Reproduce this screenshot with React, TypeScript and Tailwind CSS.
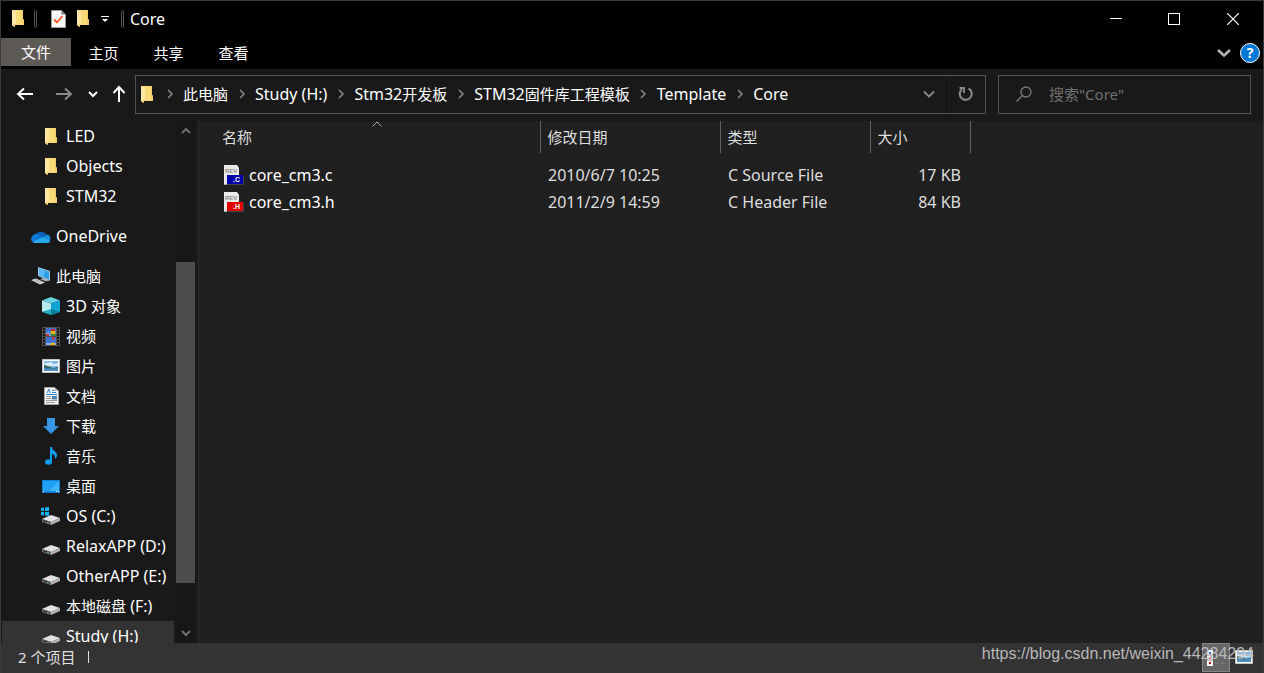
import type { ReactNode } from "react";

const FONT = "font-['Noto_Sans','Noto_Sans_CJK_SC',sans-serif]";

// Latin runs are set one step larger than the Chinese ones beside them
function Label({ text }: { text: string }) {
    const runs = text.match(/[\x20-\x7e]+|[^\x20-\x7e]+/g) ?? [];
    return (
        <span className="whitespace-pre">
            {runs.map((run) => (
                <span key={run} className={/^[\x20-\x7e]/.test(run) ? "text-base" : "text-[15px]"}>
                    {run}
                </span>
            ))}
        </span>
    );
}

/* ---------- icons ---------- */

function FolderIcon() {
    return (
        <svg width="12" height="17" viewBox="0 0 12 17" aria-hidden="true">
            <path d="M1 0h10v9l1 1v5H3z" fill="#f9d978" />
            <path d="M9 0h2v9l1 1v5h-2z" fill="#f3cf6c" />
            <path d="M0 0h1l3 2v11l-1 1v3l-3-2z" fill="#ffe8a8" />
            <path d="M3 14l-1 3-2-2z" fill="#eec765" />
        </svg>
    );
}

function CheckDocIcon() {
    return (
        <svg width="15" height="18" viewBox="0 0 15 18" aria-hidden="true">
            <path d="M.5.5h10l4 4v13H.5z" fill="#f6f8fa" stroke="#9a9a9a" />
            <path d="M10.5.5v4h4z" fill="#7d7d7d" />
            <path d="M3 9.500l3 3L11.500 6" fill="none" stroke="#ef5a1c" strokeWidth="1.800" />
        </svg>
    );
}

function Chevron({ dir, bold = false }: { dir: "up" | "down" | "right"; bold?: boolean }) {
    const paths = {
        up: "M2 8l4-4 4 4",
        down: "M2 4l4 4 4-4",
        right: "M4 2l4 4-4 4",
    };
    return (
        <svg width="12" height="12" viewBox="0 0 12 12" aria-hidden="true">
            <path d={paths[dir]} fill="none" stroke="currentColor" strokeWidth={bold ? 2 : 1.5} />
        </svg>
    );
}

function ArrowIcon({ className = "" }: { className?: string }) {
    return (
        <svg width="18" height="18" viewBox="0 0 18 18" className={className} aria-hidden="true">
            <path d="M17 9H2.500M8 3.500L2 9l6 5.500" fill="none" stroke="currentColor" strokeWidth="2" />
        </svg>
    );
}

function OneDriveIcon() {
    return (
        <svg width="20" height="13" viewBox="0 0 20 13" aria-hidden="true">
            <path d="M4.500 5A6 5 0 0 1 15.500 4.500L12 8z" fill="#0a60b4" />
            <path d="M4 13A4 4 0 0 1 1 6.500 5 5 0 0 1 7.500 4.200L14 8z" fill="#0f78d4" />
            <path d="M12 7.500L15.500 4.500A4.300 4.300 0 0 1 19.500 8.500L18 11z" fill="#1490df" />
            <path d="M2 11.500L12 7.200l7.300 3.600A2.800 2.800 0 0 1 17 13H4.500A4 4 0 0 1 2 11.500z" fill="#29a8ea" />
        </svg>
    );
}

function ComputerIcon() {
    return (
        <svg width="20" height="18" viewBox="0 0 20 18" aria-hidden="true">
            <path d="M7 0l12 4v10L7 9z" fill="#9fc4dc" />
            <path d="M8 1.500l10 3.300v7.700L8 8.300z" fill="#2d9fe8" />
            <path d="M8 1.500l6 2-1.500 6.900L8 8.300z" fill="#56b8f4" />
            <path d="M9 12l4-1 6 2-4 1.500z" fill="#a8b2b8" />
            <path d="M0 13l5-1.500 9 4L9 17.500z" fill="#d5dade" />
            <path d="M2.500 13l3-.8 6 2.800-3 1z" fill="#aeb6bb" />
        </svg>
    );
}

function CubeIcon() {
    return (
        <svg width="18" height="18" viewBox="0 0 18 18" aria-hidden="true">
            <path d="M9 0l9 3.500-9 3-9-3z" fill="#69d3e3" />
            <path d="M0 3.500l9 3V13L0 15z" fill="#b5eaf0" />
            <path d="M18 3.500l-9 3V13l9 2z" fill="#0ea5d6" />
            <path d="M0 15l9-3 9 3-9 3z" fill="#23aebf" />
            <path d="M9 12l9 3-9 3z" fill="#087e98" />
        </svg>
    );
}

function VideoIcon() {
    const holes = [1, 4, 7, 10, 13, 16];
    return (
        <svg width="18" height="19" viewBox="0 0 18 19" aria-hidden="true">
            <path d="M0 0h18v19H0z" fill="#525252" />
            {holes.map((y) => (
                <path key={y} d={`M1 ${y}h2v2h-2zM15 ${y}h2v2h-2z`} fill="#161616" />
            ))}
            <path d="M4 1h10v8H4zM4 10h10v8H4z" fill="#3f73d3" />
            <path d="M4 6l3-1 2 4H4zM4 16h10v2H4z" fill="#7fb0ea" />
            <circle cx="11" cy="5" r="2.500" fill="#e6b51d" />
            <path d="M9 2h4v2H9zM4 7h3v2H4zM10 10h3l-1 3h-1z" fill="#c92f25" />
            <path d="M9 7h5v2H9z" fill="#3f8a3a" />
            <path d="M8 17l3-2 2 2v1H8z" fill="#e6b51d" />
        </svg>
    );
}

function PictureIcon() {
    return (
        <svg width="18" height="14" viewBox="0 0 18 14" aria-hidden="true">
            <path d="M.5.5h17v13H.5z" fill="#fff" stroke="#c4c4c4" />
            <path d="M2 2h14v10H2z" fill="#7db6ea" />
            <path d="M4 4l5-1 3 2 4-1v3H2V5z" fill="#d9ebf8" />
            <path d="M2 6l4 1 5 2 5-1v2H2z" fill="#32695e" />
            <path d="M2 9l7 .5 7-.5v3H2z" fill="#4b8dc0" />
        </svg>
    );
}

function DocumentIcon() {
    return (
        <svg width="15" height="18" viewBox="0 0 15 18" aria-hidden="true">
            <path d="M.5.5h10l4 3.500v13.500H.5z" fill="#f8f8f8" stroke="#a5a5a5" />
            <path d="M10.500.5v3.500h4z" fill="#b5b5b5" />
            <path d="M3 6l2-4 1 4M8 3.500h2M8 5.500h4M2 7.500h11" fill="none" stroke="#2487cf" />
            <path d="M2 9.500h5M2 11.500h5M2 13.500h11M2 15.500h9" stroke="#9a9a9a" />
            <path d="M8 9h5v3.500H8z" fill="#4b87b4" />
        </svg>
    );
}

function DownloadIcon() {
    return (
        <svg width="16" height="16" viewBox="0 0 16 16" aria-hidden="true">
            <path d="M4 0h8v8h4l-8 8-8-8h4z" fill="#3a94e4" />
        </svg>
    );
}

function MusicIcon() {
    return (
        <svg width="12" height="18" viewBox="0 0 12 18" aria-hidden="true">
            <ellipse cx="3.500" cy="15" rx="3.500" ry="2.700" fill="#109df0" />
            <path d="M5 0h2c0 4 5 4 5 8 0 2-1 3-2 4 .5-3-1-4.500-3-5v8H5z" fill="#109df0" />
        </svg>
    );
}

function DesktopIcon() {
    return (
        <svg width="18" height="13" viewBox="0 0 18 13" aria-hidden="true">
            <path d="M0 0h18v13H0z" fill="#1080d5" />
            <path d="M1 1h16v10H1z" fill="#1fa1f7" />
            <path d="M17 1v10H7z" fill="#3eb2fb" />
            <path d="M1 11.500h1M14 11.500h1M16 11.500h1" stroke="#fff" />
        </svg>
    );
}

function DriveIcon({ system = false }: { system?: boolean }) {
    return (
        <svg width="20" height="18" viewBox="0 0 20 18" aria-hidden="true">
            <path d="M1 12l9-4 9 3-9 4z" fill="#e2e2e4" />
            <path d="M1 12l9 3v3l-9-3z" fill="#77777a" />
            <path d="M2 13l7 2.300v1.500L2 14.500z" fill="#303032" />
            <path d="M10 15l9-4v3l-9 4z" fill="#b4b4b7" />
            <path d="M6 15h2v1H6z" fill="#35c04a" />
            {system && <path d="M0 1l3-.5V4H0zM4 .4L8 0v4H4zM0 5h3v3.500L0 8zM4 5h4v4l-4-.5z" fill="#10b4f0" />}
        </svg>
    );
}

function SourceFileIcon({ tag, color }: { tag: string; color: string }) {
    return (
        <svg width="20" height="20" viewBox="0 0 20 20" aria-hidden="true">
            <path d="M0 0h13l2 3v17H0z" fill="#eaeaea" />
            <path d="M0 19h15v1H0z" fill="#aaa" />
            <text x="1" y="8" fontSize="6" fontWeight="700" fill="#8c8c8c" fontFamily="Liberation Sans, sans-serif">
                REV
            </text>
            <path d="M3 10h16v9H3z" fill={color} />
            <path d="M19.500 11v8.500H3" fill="none" stroke="#444" />
            <text x="9" y="17" fontSize="7" fontWeight="700" fill="#fff" fontFamily="Liberation Sans, sans-serif">
                {tag}
            </text>
        </svg>
    );
}

function Separator() {
    return <span className="h-[18px] w-[3px] rounded-sm border border-[#555]" />;
}

/* ---------- data ---------- */

interface TreeItem {
    label: string;
    icon: ReactNode;
    root?: boolean;
    selected?: boolean;
}

const TREE: TreeItem[] = [
    { label: "LED", icon: <FolderIcon /> },
    { label: "Objects", icon: <FolderIcon /> },
    { label: "STM32", icon: <FolderIcon /> },
    { label: "OneDrive", icon: <OneDriveIcon />, root: true },
    { label: "此电脑", icon: <ComputerIcon />, root: true },
    { label: "3D 对象", icon: <CubeIcon /> },
    { label: "视频", icon: <VideoIcon /> },
    { label: "图片", icon: <PictureIcon /> },
    { label: "文档", icon: <DocumentIcon /> },
    { label: "下载", icon: <DownloadIcon /> },
    { label: "音乐", icon: <MusicIcon /> },
    { label: "桌面", icon: <DesktopIcon /> },
    { label: "OS (C:)", icon: <DriveIcon system /> },
    { label: "RelaxAPP (D:)", icon: <DriveIcon /> },
    { label: "OtherAPP (E:)", icon: <DriveIcon /> },
    { label: "本地磁盘 (F:)", icon: <DriveIcon /> },
    { label: "Study (H:)", icon: <DriveIcon />, selected: true },
];

const CRUMBS = ["此电脑", "Study (H:)", "Stm32开发板", "STM32固件库工程模板", "Template", "Core"];

const FILES = [
    { name: "core_cm3.c", date: "2010/6/7 10:25", type: "C Source File", size: "17 KB", tag: ".C", color: "#0000a8" },
    { name: "core_cm3.h", date: "2011/2/9 14:59", type: "C Header File", size: "84 KB", tag: ".H", color: "#e00000" },
];

/* ---------- window parts ---------- */

function TitleBar() {
    return (
        <header className="flex h-[37px] shrink-0 items-center bg-black pr-px pb-0.5">
            <div className="flex flex-1 items-center pl-[11px]">
                <FolderIcon />
                <span className="ml-[10px] flex">
                    <Separator />
                </span>
                <button type="button" aria-label="属性" className="ml-[14px]">
                    <CheckDocIcon />
                </button>
                <button type="button" aria-label="新建文件夹" className="ml-[11px]">
                    <FolderIcon />
                </button>
                <button type="button" aria-label="自定义快速访问工具栏" className="mr-3 ml-3">
                    <svg width="8" height="8" viewBox="0 0 8 8" aria-hidden="true">
                        <path d="M0 1h8v1H0zM1 4h6L4 7z" fill="#fff" />
                    </svg>
                </button>
                <Separator />
                <h1 className="ml-[6px] text-base text-white">Core</h1>
            </div>
            <div className="flex h-full text-white">
                <button type="button" aria-label="最小化" className="flex w-[58px] items-center justify-center">
                    <span className="h-px w-3 bg-white" />
                </button>
                <button type="button" aria-label="最大化" className="flex w-[58px] items-center justify-center">
                    <span className="size-3 border border-white" />
                </button>
                <button type="button" aria-label="关闭" className="flex w-[59px] items-center justify-center">
                    <svg width="12" height="12" viewBox="0 0 12 12" aria-hidden="true">
                        <path d="M0 0l12 12M12 0L0 12" stroke="currentColor" strokeWidth="1.200" />
                    </svg>
                </button>
            </div>
        </header>
    );
}

function RibbonTabs() {
    return (
        <div className="flex h-[31px] shrink-0 items-start bg-black text-[15px] text-white">
            <button type="button" className="h-7 w-[70px] bg-[#5d5955]">
                文件
            </button>
            {["主页", "共享", "查看"].map((tab) => (
                <button key={tab} type="button" className="h-[31px] w-16 first-of-type:w-[70px] odd:w-[65px] even:w-[65px]">
                    {tab}
                </button>
            ))}
            <div className="flex h-[30px] flex-1 items-center justify-end gap-2 pr-[3px]">
                <button type="button" aria-label="展开功能区" className="text-[#b4b4b4]">
                    <svg width="16" height="10" viewBox="0 0 16 10" aria-hidden="true">
                        <path d="M2 2l6 5.500L14 2" fill="none" stroke="currentColor" strokeWidth="2.500" />
                    </svg>
                </button>
                <button
                    type="button"
                    aria-label="帮助"
                    className="flex size-5 items-center justify-center rounded-full border border-white bg-[#0078d7] text-sm font-bold"
                >
                    ?
                </button>
            </div>
        </div>
    );
}

function AddressRow() {
    return (
        <div className="flex h-[52px] shrink-0 items-center bg-[#191919] pr-3 pb-0.5">
            <div className="flex w-[134px] items-center text-white">
                <button type="button" aria-label="后退" className="ml-[15px]">
                    <ArrowIcon />
                </button>
                <button type="button" aria-label="前进" className="ml-[21px]">
                    <ArrowIcon className="rotate-180 text-[#8a8a8a]" />
                </button>
                <button type="button" aria-label="最近浏览的位置" className="ml-[14px]">
                    <Chevron dir="down" bold />
                </button>
                <button type="button" aria-label="上移" className="ml-[11px]">
                    <ArrowIcon className="rotate-90" />
                </button>
            </div>
            <div className="flex h-[39px] min-w-0 flex-1 border border-[#535353]">
                <nav aria-label="地址" className="flex min-w-0 flex-1 items-center pl-[5px] text-white">
                    <span className="mr-[3px]">
                        <FolderIcon />
                    </span>
                    {CRUMBS.map((crumb) => (
                        <span key={crumb} className="flex items-center whitespace-nowrap">
                            <span className="flex w-[27px] justify-center text-[#8a8a8a]">
                                <Chevron dir="right" />
                            </span>
                            <button type="button">
                                <Label text={crumb} />
                            </button>
                        </span>
                    ))}
                </nav>
                <button type="button" aria-label="以前的位置" className="flex w-[35px] items-center justify-center text-[#8a8a8a]">
                    <svg width="14" height="14" viewBox="0 0 14 14" aria-hidden="true">
                        <path d="M2 4.500l5 5 5-5" fill="none" stroke="currentColor" strokeWidth="1.800" />
                    </svg>
                </button>
                <button
                    type="button"
                    aria-label="刷新"
                    className="flex w-[39px] items-center justify-center border-l border-[#121212] text-[#8a8a8a]"
                >
                    <svg width="16" height="16" viewBox="0 0 16 16" aria-hidden="true">
                        <path d="M10.500 2.500A6 6 0 1 1 4 3.200" fill="none" stroke="currentColor" strokeWidth="2" />
                        <path d="M1.500 2H6v5" fill="none" stroke="currentColor" strokeWidth="1.800" />
                    </svg>
                </button>
            </div>
            <label className="ml-3 flex h-[39px] w-[253px] items-center gap-[17px] border border-[#535353] pl-[17px] text-[#7a7a7a]">
                <svg width="16" height="16" viewBox="0 0 16 16" className="shrink-0" aria-hidden="true">
                    <circle cx="10" cy="6" r="5" fill="none" stroke="currentColor" strokeWidth="1.300" />
                    <path d="M6.500 9.500L.5 15.500" stroke="currentColor" strokeWidth="1.300" />
                </svg>
                <input
                    type="text"
                    aria-label="搜索"
                    placeholder={'搜索"Core"'}
                    className="w-full min-w-0 bg-transparent text-[15px] outline-none placeholder:text-[#707070]"
                />
            </label>
        </div>
    );
}

function Sidebar() {
    return (
        <aside className="flex w-[198px] shrink-0 border-r border-[#2b2b2b] bg-[#191919]">
            <ul className="min-w-0 flex-1 overflow-hidden pl-px text-white">
                {TREE.map((item) => (
                    <li key={item.label} className={item.root ? "pt-[10px]" : ""}>
                        <button
                            type="button"
                            className={`flex h-[30px] w-full items-center gap-[5px] whitespace-nowrap ${
                                item.root ? "pl-[29px]" : "pl-[39px]"
                            } ${item.selected ? "bg-[#333]" : ""}`}
                        >
                            <span className="flex w-5 shrink-0 justify-center">{item.icon}</span>
                            <Label text={item.label} />
                        </button>
                    </li>
                ))}
            </ul>
            <div className="mr-[3px] ml-[2px] flex w-[19px] flex-col bg-[#171717] text-[#6e6e6e]">
                <button type="button" aria-label="向上滚动" className="flex h-5 items-center justify-center">
                    <Chevron dir="up" bold />
                </button>
                <span className="grow-[121]" />
                <span className="grow-[321] bg-[#4d4d4d]" />
                <span className="grow-[40]" />
                <button type="button" aria-label="向下滚动" className="flex h-5 items-center justify-center">
                    <Chevron dir="down" bold />
                </button>
            </div>
        </aside>
    );
}

function FileList() {
    const th = "border-r border-[#636363] pl-[7px] text-left font-normal";
    return (
        <main className="min-w-0 flex-1 overflow-hidden bg-[#202020]">
            <table className="w-[771px] table-fixed text-base text-[#dedede]">
                <thead className="text-[15px]">
                    <tr className="h-8">
                        <th className="relative w-[341px] border-r border-[#636363] pl-[23px] text-left font-normal">
                            名称
                            <svg
                                width="10"
                                height="6"
                                viewBox="0 0 10 6"
                                className="absolute top-0 left-[173px]"
                                aria-hidden="true"
                            >
                                <path d="M.5 5.500L5 1l4.500 4.500" fill="none" stroke="#b0b0b0" />
                            </svg>
                        </th>
                        <th className={`${th} w-[180px]`}>修改日期</th>
                        <th className={`${th} w-[150px]`}>类型</th>
                        <th className={`${th} w-[100px]`}>大小</th>
                    </tr>
                </thead>
                <tbody className="before:block before:h-2">
                    {FILES.map((file) => (
                        <tr key={file.name} className="h-[27px]">
                            <td className="pl-[25px] text-white">
                                <span className="flex items-center gap-[5px]">
                                    <SourceFileIcon tag={file.tag} color={file.color} />
                                    {file.name}
                                </span>
                            </td>
                            <td className="pl-2">{file.date}</td>
                            <td className="pl-2">{file.type}</td>
                            <td className="pr-[9px] text-right">{file.size}</td>
                        </tr>
                    ))}
                </tbody>
            </table>
        </main>
    );
}

function StatusBar() {
    return (
        <footer className="relative flex h-[30px] shrink-0 items-center bg-[#333] pr-[10px] pb-0.5 pl-[17px] text-[15px] text-[#e0e0e0]">
            <span>2 个项目</span>
            <span className="ml-[13px] h-3 w-px bg-[#e0e0e0]" />
            <div className="ml-auto flex h-full items-start gap-[5px]">
                <button
                    type="button"
                    aria-label="详细信息"
                    className="flex h-[29px] w-7 items-center justify-center border border-[#858585] bg-[#666]"
                >
                    <svg width="18" height="16" viewBox="0 0 18 16" aria-hidden="true">
                        <path d="M0 0h6v16H0z" fill="#f4f4f4" />
                        <path d="M2 2h2v2H2z" fill="#2f6fb0" />
                        <path d="M2 7h2v2H2z" fill="#d98a6c" />
                        <path d="M2 12h2v2H2z" fill="#b81616" />
                        <path d="M0 5h6M0 10h6" stroke="#8a8a8a" />
                        <path d="M8 13h4M14 13h4" stroke="#808080" />
                    </svg>
                </button>
                <button type="button" aria-label="大图标" className="flex h-7 items-center">
                    <PictureIcon />
                </button>
            </div>
            <span className="pointer-events-none absolute top-[-1px] right-[9px] font-['Liberation_Sans',sans-serif] text-base text-[#b8b8b8]">
                https://blog.csdn.net/weixin_44234294
            </span>
        </footer>
    );
}

export default function App() {
    return (
        <div className={`flex h-screen flex-col overflow-hidden border-t border-r border-l border-[#3a3a3a] bg-[#202020] ${FONT}`}>
            <TitleBar />
            <RibbonTabs />
            <AddressRow />
            <div className="flex min-h-0 flex-1">
                <Sidebar />
                <FileList />
            </div>
            <StatusBar />
        </div>
    );
}
